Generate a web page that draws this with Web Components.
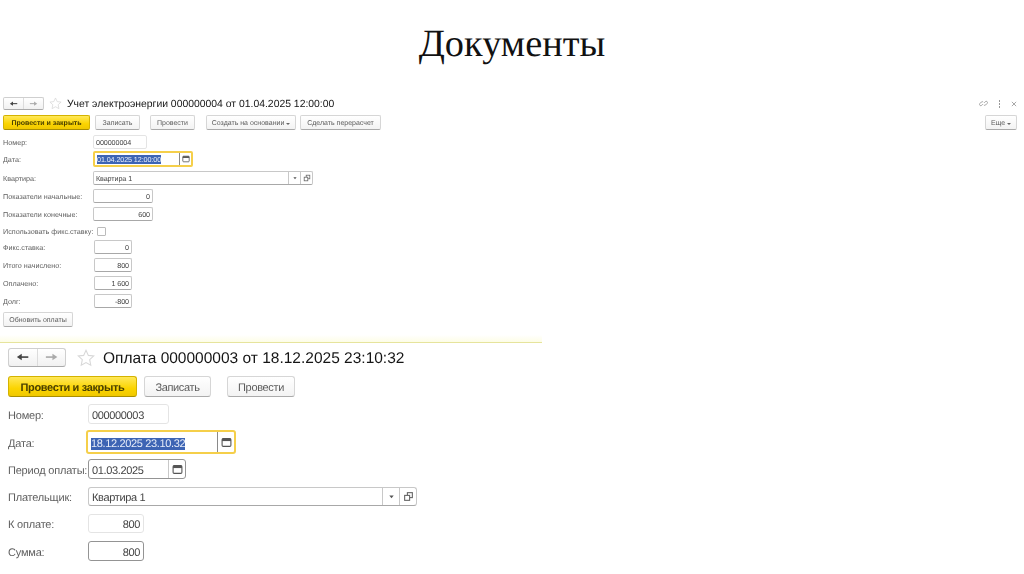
<!doctype html>
<html lang="ru">
<head>
<meta charset="utf-8">
<title>Документы</title>
<style>
  html, body { margin: 0; height: 574px; overflow: hidden; background: #fff; }
  body { font-family: "Liberation Sans", Arial, sans-serif; color: #4b4b4b; text-rendering: geometricPrecision; }
  #small { --fs: 7.2px; --ls: 0px; --val-ls: -0.1px; --btn-fs: 7px; --btn-ls: 0px; --title: 10.4px; --btn-h: 15px; --radius: 2px; --pad-x: 2px; --icon: 8px; --cell: 11px; --nudge: 0px; margin-left: 3px; margin-top: 1px; filter: blur(0.4px); }
  #large { --fs: 11px; --ls: -0.2px; --val-ls: -0.35px; --btn-fs: 11px; --btn-ls: -0.35px; --title: 15.5px; --btn-h: 21px; --radius: 3px; --pad-x: 3px; --icon: 11px; --cell: 16px; --nudge: 3px; margin-left: 8px; margin-top: 5px; filter: blur(0.3px); }
</style>
</head>
<body>
<slide-title>Документы</slide-title>

<doc-form id="small" style="height:244px">
  <doc-header nav-w="41" nav-h="13" star="13" gap="5" title-gap="5">
    Учет электроэнергии 000000004 от 01.04.2025 12:00:00
    <win-tools slot="tools"></win-tools>
  </doc-header>
  <tool-bar style="margin-top:5px;gap:5px">
    <tool-button primary w="87">Провести и закрыть</tool-button>
    <tool-button w="45">Записать</tool-button>
    <tool-button w="45" style="margin-left:5px">Провести</tool-button>
    <tool-button w="90" style="margin-left:6px">Создать на основании&nbsp; <small-caret></small-caret></tool-button>
    <tool-button w="81" style="margin-left:-1px">Сделать перерасчет</tool-button>
    <tool-button w="32" style="margin-left:auto;margin-right:7px">Еще&nbsp;<small-caret></small-caret></tool-button>
  </tool-bar>
  <form-row label="Номер:" w="90" h="14" style="margin-top:5px">
    <text-field w="54" flat value="000000004"></text-field>
  </form-row>
  <form-row label="Дата:" w="90" h="16" style="margin-top:2px">
    <text-field w="100" focused selected calendar value="01.04.2025 12:00:00"></text-field>
  </form-row>
  <form-row label="Квартира:" w="90" h="14" style="margin-top:4px">
    <text-field w="220" choice value="Квартира 1"></text-field>
  </form-row>
  <form-row label="Показатели начальные:" w="90" h="14" style="margin-top:4px">
    <text-field w="60" right value="0"></text-field>
  </form-row>
  <form-row label="Показатели конечные:" w="90" h="14" style="margin-top:4px">
    <text-field w="60" right value="600"></text-field>
  </form-row>
  <form-row label="Использовать фикс.ставку:" w="91" h="10" style="margin-top:5px">
    <check-box></check-box>
  </form-row>
  <form-row label="Фикс.ставка:" w="91" h="14" style="margin-top:4px">
    <text-field w="38" right value="0"></text-field>
  </form-row>
  <form-row label="Итого начислено:" w="91" h="14" style="margin-top:4px">
    <text-field w="38" right value="800"></text-field>
  </form-row>
  <form-row label="Оплачено:" w="91" h="14" style="margin-top:4px">
    <text-field w="38" right value="1 600"></text-field>
  </form-row>
  <form-row label="Долг:" w="91" h="14" style="margin-top:4px">
    <text-field w="38" right value="-800"></text-field>
  </form-row>
  <tool-bar style="margin-top:4px">
    <tool-button w="70">Обновить оплаты</tool-button>
  </tool-bar>
</doc-form>

<doc-divider></doc-divider>

<doc-form id="large">
  <doc-header nav-w="58" nav-h="19" star="18" gap="11" title-gap="8">Оплата 000000003 от 18.12.2025 23:10:32</doc-header>
  <tool-bar style="margin-top:9px;gap:7px">
    <tool-button primary w="129">Провести и закрыть</tool-button>
    <tool-button w="67">Записать</tool-button>
    <tool-button w="68" style="margin-left:9px">Провести</tool-button>
  </tool-bar>
  <form-row label="Номер:" w="80" h="20" style="margin-top:7px">
    <text-field w="81" flat value="000000003"></text-field>
  </form-row>
  <form-row label="Дата:" w="78" h="24" style="margin-top:6px">
    <text-field w="150" focused selected calendar value="18.12.2025 23.10.32"></text-field>
  </form-row>
  <form-row label="Период оплаты:" w="80" h="20" style="margin-top:5px">
    <text-field w="98" strong calendar value="01.03.2025"></text-field>
  </form-row>
  <form-row label="Плательщик:" w="80" h="19" style="margin-top:8px">
    <text-field w="329" choice value="Квартира 1"></text-field>
  </form-row>
  <form-row label="К оплате:" w="80" h="19" style="margin-top:8px">
    <text-field w="56" flat right value="800"></text-field>
  </form-row>
  <form-row label="Сумма:" w="80" h="20" style="margin-top:8px">
    <text-field w="56" strong right value="800"></text-field>
  </form-row>
</doc-form>

<script>
  class SlideTitle extends HTMLElement {
    connectedCallback() {
      this.attachShadow({ mode: "open" }).innerHTML = `
        <style>
          :host {
            display: flex;
            justify-content: center;
            align-items: center;
            box-sizing: border-box;
            height: 86px;
            padding-top: 2px;
            margin-bottom: 11px;
            font: 38.4px/1 "Liberation Serif", "Times New Roman", serif;
            color: #111;
          }
        </style>
        <slot></slot>
      `;
    }
  }

  class DocHeader extends HTMLElement {
    connectedCallback() {
      const navW = this.getAttribute("nav-w");
      const navH = this.getAttribute("nav-h");
      const star = this.getAttribute("star");
      const gap = this.getAttribute("gap");
      const titleGap = this.getAttribute("title-gap");
      this.attachShadow({ mode: "open" }).innerHTML = `
        <style>
          :host {
            display: flex;
            align-items: center;
            height: ${navH}px;
            font-size: var(--title);
            color: #151515;
          }
          .nav {
            display: flex;
            width: ${navW}px;
            height: 100%;
            box-sizing: border-box;
            border: 1px solid #cfcfcf;
            border-bottom-color: #aaa;
            border-radius: var(--radius);
            background: linear-gradient(#fff, #f1f1f1);
          }
          .nav span { flex: 1; display: flex; align-items: center; justify-content: center; }
          .nav span + span { border-left: 1px solid #dcdcdc; }
          .nav svg { width: 48%; height: 48%; }
          .star { width: ${star}px; height: ${star}px; flex: none; margin: 0 ${titleGap}px 0 ${gap}px; }
          .title { white-space: nowrap; padding-top: 2px; }
          .grow { flex: 1; display: flex; justify-content: flex-end; }
        </style>
        <div class="nav">
          <span><svg viewBox="0 0 16 10"><path d="M15 5H6" stroke="#444" stroke-width="2"/><path d="M7 1 1 5l6 4z" fill="#444"/></svg></span>
          <span><svg viewBox="0 0 16 10"><path d="M1 5h9" stroke="#aaa" stroke-width="2"/><path d="M9 1l6 4-6 4z" fill="#aaa"/></svg></span>
        </div>
        <svg class="star" viewBox="0 0 20 20"><path d="M10 1.5l2.6 5.6 6 .7-4.5 4.1 1.2 6L10 15l-5.3 2.9 1.2-6L1.4 7.8l6-.7z" fill="#fff" stroke="#d8d8d8" stroke-width="1.2"/></svg>
        <span class="title"><slot></slot></span>
        <span class="grow"><slot name="tools"></slot></span>
      `;
    }
  }

  class WinTools extends HTMLElement {
    connectedCallback() {
      this.attachShadow({ mode: "open" }).innerHTML = `
        <style>
          :host { display: flex; align-items: center; gap: 10px; margin-right: 7px; }
          svg { display: block; }
        </style>
        <svg width="9" height="9" viewBox="0 0 10 10" fill="none" stroke="#999" stroke-width="1"><path d="M4.2 5.8 3 7a1.4 1.4 0 0 1-2-2l1.6-1.6a1.4 1.4 0 0 1 2 0M5.8 4.2 7 3a1.4 1.4 0 0 1 2 2L7.4 6.6a1.4 1.4 0 0 1-2 0"/></svg>
        <svg width="3" height="8" viewBox="0 0 3 8" fill="#999"><rect x="1" y="0" width="1" height="2"/><rect x="1" y="3" width="1" height="2"/><rect x="1" y="6" width="1" height="2"/></svg>
        <svg width="6" height="6" viewBox="0 0 7 7" stroke="#999" stroke-width="1"><path d="M1 1l5 5M6 1 1 6"/></svg>
      `;
    }
  }

  class ToolBar extends HTMLElement {
    connectedCallback() {
      this.attachShadow({ mode: "open" }).innerHTML = `
        <style>:host { display: flex; align-items: stretch; }</style>
        <slot></slot>
      `;
    }
  }

  class ToolButton extends HTMLElement {
    connectedCallback() {
      const primary = this.hasAttribute("primary");
      this.attachShadow({ mode: "open" }).innerHTML = `
        <style>
          :host {
            display: flex;
            align-items: center;
            justify-content: center;
            flex: none;
            box-sizing: border-box;
            width: ${this.getAttribute("w")}px;
            height: var(--btn-h);
            padding-top: 2px;
            font-size: var(--btn-fs);
            letter-spacing: var(--btn-ls);
            white-space: nowrap;
            border-radius: var(--radius);
            border: 1px solid ${primary ? "#d4b300" : "#d6d6d6"};
            border-bottom-color: ${primary ? "#a98e00" : "#aaa"};
            background: ${primary ? "linear-gradient(#ffe85a, #fbd400 60%, #f0c800)" : "linear-gradient(#fff, #f3f3f3)"};
            color: ${primary ? "#4a4000" : "#5c5c5c"};
            font-weight: ${primary ? "bold" : "normal"};
          }
        </style>
        <slot></slot>
      `;
    }
  }

  class SmallCaret extends HTMLElement {
    connectedCallback() {
      this.attachShadow({ mode: "open" }).innerHTML = `
        <style>
          :host {
            display: inline-block;
            width: 0;
            height: 0;
            border-left: 2px solid transparent;
            border-right: 2px solid transparent;
            border-top: 2px solid #666;
          }
        </style>
      `;
    }
  }

  class FormRow extends HTMLElement {
    connectedCallback() {
      this.attachShadow({ mode: "open" }).innerHTML = `
        <style>
          :host {
            display: flex;
            align-items: center;
            height: ${this.getAttribute("h")}px;
            font-size: var(--fs);
            letter-spacing: var(--ls);
          }
          .label {
            flex: none;
            width: ${this.getAttribute("w")}px;
            padding-top: var(--nudge);
            white-space: nowrap;
            color: #5f5f5f;
          }
        </style>
        <span class="label">${this.getAttribute("label")}</span>
        <slot></slot>
      `;
    }
  }

  class TextField extends HTMLElement {
    connectedCallback() {
      const focused = this.hasAttribute("focused");
      const flat = this.hasAttribute("flat");
      const strong = this.hasAttribute("strong");
      const selected = this.hasAttribute("selected");
      const value = this.getAttribute("value");
      const cells = [];
      if (this.hasAttribute("calendar")) {
        cells.push(`<svg viewBox="0 0 10 10"><rect x="1" y="1.5" width="8" height="7" rx="1" fill="#fff" stroke="#555"/><rect x="1" y="1.5" width="8" height="2.2" fill="#555"/></svg>`);
      }
      if (this.hasAttribute("choice")) {
        cells.push(`<svg viewBox="0 0 10 10"><path d="M3 4h4L5 6.5z" fill="#555"/></svg>`);
        cells.push(`<svg viewBox="0 0 10 10" fill="#fff" stroke="#666"><rect x="4" y="1.5" width="4.5" height="4.5"/><rect x="1.5" y="4" width="4.5" height="4.5"/></svg>`);
      }
      this.attachShadow({ mode: "open" }).innerHTML = `
        <style>
          :host {
            display: flex;
            flex: none;
            box-sizing: border-box;
            width: ${this.getAttribute("w")}px;
            height: 100%;
            align-self: stretch;
            background: #fff;
            color: #444;
            border-radius: var(--radius);
            border: ${focused ? "2px solid #f5cf4a" : `1px solid ${flat ? "#e4e4e4" : strong ? "#949494" : "#c8c8c8"}`};
            ${flat || strong || focused ? "" : "border-bottom-color: #a8a8a8;"}
            font-size: var(--fs);
            letter-spacing: var(--val-ls);
          }
          .value {
            flex: 1;
            min-width: 0;
            display: flex;
            align-items: center;
            justify-content: ${this.hasAttribute("right") ? "flex-end" : "flex-start"};
            padding: var(--nudge) var(--pad-x) 0;
            white-space: nowrap;
          }
          mark { background: #3d64b4; color: #e6ecf8; }
          .cell {
            flex: none;
            width: var(--cell);
            display: flex;
            align-items: center;
            justify-content: center;
            border-left: 1px solid ${focused ? "#8a8a8a" : "#c8c8c8"};
          }
          .cell svg { width: var(--icon); height: var(--icon); }
        </style>
        <span class="value">${selected ? `<mark>${value}</mark>` : value}</span>
        ${cells.map((icon) => `<span class="cell">${icon}</span>`).join("")}
      `;
    }
  }

  class CheckBox extends HTMLElement {
    connectedCallback() {
      this.attachShadow({ mode: "open" }).innerHTML = `
        <style>
          :host {
            display: block;
            box-sizing: border-box;
            width: 9px;
            height: 9px;
            margin-left: 3px;
            border: 1px solid #bbb;
            border-radius: 1px;
            background: #fff;
          }
        </style>
      `;
    }
  }

  class DocDivider extends HTMLElement {
    connectedCallback() {
      this.attachShadow({ mode: "open" }).innerHTML = `
        <style>
          :host {
            display: block;
            width: 542px;
            height: 8px;
            margin-top: -6px;
            box-sizing: border-box;
            border-bottom: 1px solid #e6e49c;
            background: linear-gradient(#fff, #fdfde6);
          }
        </style>
      `;
    }
  }

  class DocForm extends HTMLElement {
    connectedCallback() {
      this.attachShadow({ mode: "open" }).innerHTML = `
        <style>:host { display: block; }</style>
        <slot></slot>
      `;
    }
  }

  customElements.define("slide-title", SlideTitle);
  customElements.define("doc-header", DocHeader);
  customElements.define("win-tools", WinTools);
  customElements.define("tool-bar", ToolBar);
  customElements.define("tool-button", ToolButton);
  customElements.define("small-caret", SmallCaret);
  customElements.define("form-row", FormRow);
  customElements.define("text-field", TextField);
  customElements.define("check-box", CheckBox);
  customElements.define("doc-divider", DocDivider);
  customElements.define("doc-form", DocForm);
</script>
</body>
</html>
